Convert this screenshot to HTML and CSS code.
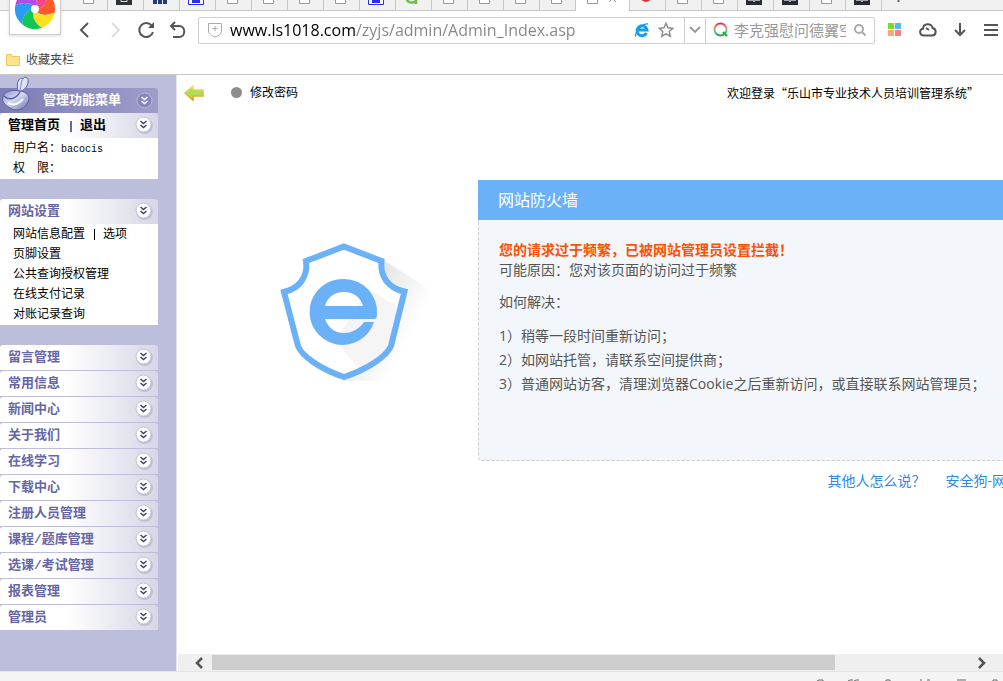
FILE: index.html
```html
<!DOCTYPE html>
<html lang="zh-CN">
<head>
<meta charset="utf-8">
<title>乐山市专业技术人员培训管理系统</title>
<link rel="stylesheet" href="styles.css">
</head>
<body>
<svg class="defs" aria-hidden="true">
  <defs>
    <linearGradient id="gold" x1="0" y1="0" x2="0" y2="1"><stop offset="0" stop-color="#f6e36a"/><stop offset="1" stop-color="#d99a1c"/></linearGradient>
    <linearGradient id="long" x1="0" y1="0" x2="1" y2="0.6"><stop offset="0.3" stop-color="#dcdcdc"/><stop offset="0.75" stop-color="#fff"/></linearGradient>
    <linearGradient id="pot" x1="0" y1="0" x2="1" y2="1"><stop offset="0" stop-color="#8d90cc"/><stop offset="0.45" stop-color="#d5d9f2"/><stop offset="1" stop-color="#686fb0"/></linearGradient>
    <linearGradient id="ring" x1="0" y1="0" x2="0" y2="1"><stop offset="0" stop-color="#e2228d"/><stop offset="0.35" stop-color="#f5a31c"/><stop offset="0.65" stop-color="#2fb7e8"/><stop offset="1" stop-color="#35a935"/></linearGradient>
    <symbol id="page" viewBox="0 0 16 5"><path d="M3.5-2V3.5h10V-2" fill="#fff" stroke="#999"/></symbol>
    <symbol id="dark" viewBox="0 0 16 5"><path d="M0 0h16v5H0z" fill="#262b35"/><path d="M2 0h12v1H2zM7 1h2v1H7z" fill="#a5a8ae"/></symbol>
    <symbol id="frame" viewBox="0 0 16 5"><path d="M0 0h16v5H0z" fill="#2e3338"/><path d="M5 0v1.5h6V0" fill="none" stroke="#ddd"/></symbol>
    <symbol id="bars" viewBox="0 0 16 5"><path d="M1 0h4v4H1zM6 0h4v4H6zM11 0h4v4h-4z" fill="#253c7c"/></symbol>
    <symbol id="paw" viewBox="0 0 16 5"><path d="M.5 0v4.5h15V0" fill="#fff" stroke="#2932e1"/><path d="M4 0h8v3H4z" fill="#2932e1"/></symbol>
    <symbol id="green" viewBox="0 0 16 5"><path d="M3-1c0 4 8 5 9 1M12-1v5" fill="none" stroke="#6cc04a" stroke-width="2.5"/></symbol>
    <symbol id="red" viewBox="0 0 16 5"><path d="M3-1c3 3 7 3 10 0z" fill="#e12a24" stroke="#e12a24"/></symbol>
    <path id="blade" d="M4 0Q12-4 12.900-15.300A20 20 0 0 1 19.700 3.500Q9.500 8.400 2 3.500z"/>
    <symbol id="toggle" viewBox="0 0 20 20">
      <circle cx="10.500" cy="10.800" r="8.300" fill="#a9a9cc" opacity=".55"/>
      <circle cx="9.500" cy="9.500" r="7.500" fill="#fff" stroke="#c2c2dc"/>
      <path d="M6.500 6l3 2.500 3-2.500M6.500 10l3 2.500 3-2.500" fill="none" stroke="#3f3f80" stroke-width="1.500"/>
    </symbol>
  </defs>
</svg>

<header class="browser">
  <a class="logo" href="#" aria-label="主页">
    <svg width="42" height="31" viewBox="0 0 42 31">
      <g transform="translate(20 9)">
        <use href="#blade" fill="#ff5a2c"/>
        <use href="#blade" fill="#ffdf22" transform="rotate(60)"/>
        <use href="#blade" fill="#0fc754" transform="rotate(120)"/>
        <use href="#blade" fill="#2a9bf7" transform="rotate(180)"/>
        <use href="#blade" fill="#b44be8" transform="rotate(240)"/>
        <use href="#blade" fill="#f5468c" transform="rotate(300)"/>
        <circle r="4" fill="#fff"/>
      </g>
    </svg>
  </a>
  <nav class="tabs" aria-label="标签页">
    <button class="tab" aria-label="标签 1"><svg><use href="#page"/></svg></button>
    <button class="tab" aria-label="标签 2"><svg><use href="#frame"/></svg></button>
    <button class="tab" aria-label="标签 3"><svg><use href="#bars"/></svg></button>
    <button class="tab" aria-label="标签 4"><svg><use href="#paw"/></svg></button>
    <button class="tab" aria-label="标签 5"><svg><use href="#page"/></svg></button>
    <button class="tab" aria-label="标签 6"><svg><use href="#page"/></svg></button>
    <button class="tab" aria-label="标签 7"><svg><use href="#page"/></svg></button>
    <button class="tab" aria-label="标签 8"><svg><use href="#page"/></svg></button>
    <button class="tab" aria-label="标签 9"><svg><use href="#paw"/></svg></button>
    <button class="tab" aria-label="标签 10"><svg><use href="#green"/></svg></button>
    <button class="tab" aria-label="标签 11"><svg><use href="#page"/></svg></button>
    <button class="tab" aria-label="标签 12"><svg><use href="#page"/></svg></button>
    <button class="tab" aria-label="标签 13"><svg><use href="#page"/></svg></button>
    <button class="tab" aria-label="标签 14"><svg><use href="#page"/></svg></button>
    <button class="tab active" aria-label="当前标签"><svg><use href="#page"/></svg><svg viewBox="0 0 16 5"><path d="M3-5l7 7M10-5L3 2" stroke="#999" fill="none"/></svg></button>
    <button class="tab" aria-label="标签 16"><svg><use href="#red"/></svg></button>
    <button class="tab" aria-label="标签 17"><svg><use href="#page"/></svg></button>
    <button class="tab" aria-label="标签 18"><svg><use href="#page"/></svg></button>
    <button class="tab" aria-label="标签 19"><svg><use href="#dark"/></svg></button>
    <button class="tab" aria-label="标签 20"><svg><use href="#dark"/></svg></button>
    <button class="tab" aria-label="标签 21"><svg><use href="#page"/></svg></button>
    <button class="tab" aria-label="标签 22"><svg><use href="#dark"/></svg></button>
    <button class="tab add" aria-label="新建标签"><svg viewBox="0 0 16 5"><path d="M8.500 0v2" stroke="#666" stroke-width="2"/></svg></button>
  </nav>
  <div class="toolbar">
    <div class="nav">
      <button aria-label="后退"><svg width="18" height="20" viewBox="0 0 18 20"><path d="M13 3L6 10l7 7" class="line"/></svg></button>
      <button aria-label="前进"><svg width="18" height="20" viewBox="0 0 18 20"><path d="M6 3l7 7-7 7" class="line faint"/></svg></button>
      <button aria-label="刷新"><svg width="18" height="20" viewBox="0 0 18 20"><path d="M15 6A7 7 0 1 0 16 12" class="line"/><path d="M17 2v6h-6z" fill="#555"/></svg></button>
      <button aria-label="恢复"><svg width="18" height="20" viewBox="0 0 18 20"><path d="M7 2L3 6l4 4M3 6h8c7 0 7 11 0 11H5" class="line"/></svg></button>
    </div>
    <form class="bar">
      <svg class="shield-mini" width="14" height="16" viewBox="0 0 14 16"><path d="M.5 1.500h13V9c0 3-3 5-6.500 6C3.500 14 .5 12 .5 9z" fill="none" stroke="#aaa"/><path d="M7 4v5M4.500 6.500h5" stroke="#aaa"/></svg>
      <input class="url" type="text" aria-label="地址" value="www.ls1018.com/zyjs/admin/Admin_Index.asp">
      <button type="button" aria-label="兼容模式"><svg width="16" height="16" viewBox="0 0 16 16"><path d="M12.500 11A5 5 0 1 1 13 8H4" fill="none" stroke="#12a0ec" stroke-width="3"/><path d="M2 14.500C0 12 8 1 14 2" fill="none" stroke="#12a0ec" stroke-width="1.300"/></svg></button>
      <button type="button" aria-label="收藏"><svg width="16" height="16" viewBox="0 0 16 16"><path d="M8 1.300l2 4.500 4.900.5-3.700 3.200 1.100 4.800L8 11.800l-4.300 2.500 1.100-4.800L1.100 6.300 6 5.800z" fill="none" stroke="#888" stroke-width="1.400"/></svg></button>
      <button type="button" class="drop" aria-label="展开"><svg width="14" height="10" viewBox="0 0 14 10"><path d="M2 2l5 5 5-5" fill="none" stroke="#999" stroke-width="1.800"/></svg></button>
      <svg class="engine" width="16" height="16" viewBox="0 0 16 16"><circle cx="7.500" cy="7.500" r="6" fill="none" stroke="url(#ring)" stroke-width="1.800"/><path d="M10 10l4 4" stroke="#35a935" stroke-width="2.400"/></svg>
      <input class="search" type="text" aria-label="搜索" placeholder="李克强慰问德翼空">
      <button type="button" class="find" aria-label="搜索"><svg width="14" height="14" viewBox="0 0 14 14"><circle cx="6" cy="6" r="4" fill="none" stroke="#aaa" stroke-width="2"/><path d="M9 9l3.500 3.500" stroke="#aaa" stroke-width="2"/></svg></button>
    </form>
    <div class="tools">
      <button aria-label="应用"><svg width="14" height="14" viewBox="0 0 14 14"><path fill="#7cdb22" d="M0 0h6v6H0z"/><path fill="#5ab4fb" d="M7 0h6v6H7z"/><path fill="#fda67c" d="M0 7h6v6H0z"/><path fill="#f57f88" d="M7 7h6v6H7z"/></svg></button>
      <button aria-label="云"><svg width="18" height="14" viewBox="0 0 18 14"><path d="M5 12.500C0 12.500 0 6 4 5.800 4 0 13 0 13.500 5 18 6 17.500 12.500 13 12.500zM7 5l3 2" class="line"/></svg></button>
      <button aria-label="下载"><svg width="14" height="14" viewBox="0 0 14 14"><path d="M7 0v12M2 7l5 5 5-5" class="line"/></svg></button>
      <button aria-label="菜单"><svg width="14" height="14" viewBox="0 0 14 14"><path d="M0 2h14M0 7h14M0 12h14" class="line"/></svg></button>
    </div>
  </div>
  <div class="bookmarks">
    <svg width="14" height="12" viewBox="0 0 14 12"><path d="M.5.5h5l1 2h7v9H.5z" fill="#fde58b" stroke="#efc45c"/></svg>
    <a href="#">收藏夹栏</a>
  </div>
</header>

<div class="frames">
  <aside class="side">
    <div class="side-title">
      <svg class="pot" width="32" height="36" viewBox="0 0 32 36"><path d="M18 15C16 6 19 1 23 3c1-3 6-2 5 3 0 4-3 7-6 9z" fill="#dfe3f7" stroke="#5b60a5"/><path d="M22 4c-1 4-1 7-2 10" stroke="#7a80be" fill="none"/><path d="M3 21c0-5 9-8 16-6 8 0 12 6 9 11-2 6-10 10-16 7S1 26 3 21z" fill="url(#pot)" stroke="#585da3"/><path d="M4 20c5 5 12 3 16-4" fill="none" stroke="#5a60a6" stroke-width="1.500"/><path d="M8 27c5 3 11 1 15-4" fill="none" stroke="#fff" stroke-width="2"/></svg>
      <h1>管理功能菜单</h1>
      <button aria-label="展开菜单"><svg width="20" height="20" viewBox="0 0 20 20"><circle cx="9.500" cy="9.500" r="7.500" fill="#8686bb" stroke="#b9b9dc"/><path d="M6.500 6l3 2.500 3-2.500M6.500 10l3 2.500 3-2.500" fill="none" stroke="#fff" stroke-width="1.500"/></svg></button>
    </div>
    <section class="group open">
      <h2 class="top"><a href="#">管理首页</a><span class="bar-sep"></span><a href="#">退出</a><button aria-label="展开"><svg><use href="#toggle"/></svg></button></h2>
      <ul><li>用户名：<span class="user">bacocis</span></li><li>权&#12288;限：</li></ul>
    </section>
    <section class="group open">
      <h2>网站设置<button aria-label="展开"><svg><use href="#toggle"/></svg></button></h2>
      <ul>
        <li class="pair"><a href="#">网站信息配置</a><span class="thin-sep"></span><a href="#">选项</a></li>
        <li><a href="#">页脚设置</a></li>
        <li><a href="#">公共查询授权管理</a></li>
        <li><a href="#">在线支付记录</a></li>
        <li><a href="#">对账记录查询</a></li>
      </ul>
    </section>
    <section class="closed">
      <h2>留言管理<button aria-label="展开"><svg><use href="#toggle"/></svg></button></h2>
      <h2>常用信息<button aria-label="展开"><svg><use href="#toggle"/></svg></button></h2>
      <h2>新闻中心<button aria-label="展开"><svg><use href="#toggle"/></svg></button></h2>
      <h2>关于我们<button aria-label="展开"><svg><use href="#toggle"/></svg></button></h2>
      <h2>在线学习<button aria-label="展开"><svg><use href="#toggle"/></svg></button></h2>
      <h2>下载中心<button aria-label="展开"><svg><use href="#toggle"/></svg></button></h2>
      <h2>注册人员管理<button aria-label="展开"><svg><use href="#toggle"/></svg></button></h2>
      <h2>课程/题库管理<button aria-label="展开"><svg><use href="#toggle"/></svg></button></h2>
      <h2>选课/考试管理<button aria-label="展开"><svg><use href="#toggle"/></svg></button></h2>
      <h2>报表管理<button aria-label="展开"><svg><use href="#toggle"/></svg></button></h2>
      <h2>管理员<button aria-label="展开"><svg><use href="#toggle"/></svg></button></h2>
    </section>
  </aside>

  <div class="right">
    <div class="crumbs">
      <button aria-label="收起侧栏"><svg width="20" height="16" viewBox="0 0 20 16"><path d="M1 8l8-7v4h10v6H9v4z" fill="#a8e05a" stroke="url(#gold)" stroke-width="1.600"/></svg></button>
      <span class="dot"></span>
      <a href="#">修改密码</a>
      <p>欢迎登录“乐山市专业技术人员培训管理系统”</p>
    </div>
    <main class="content">
      <svg class="shield" width="170" height="138" viewBox="0 0 170 138">
        <path d="M103 17L168 58l-20 80H63z" fill="url(#long)" opacity=".75"/>
        <path d="M64 3.500L101.500 18C100 32 107 45 124.500 48.500L111 103C107 113 88 126 64 134 40 126 22 113 18 103L4 49C21 45 28 32 26 18z" fill="#fff"/>
        <path d="M89 46l32 20-12 40-30 20L55 98z" fill="#f1f1f1" opacity=".75"/>
        <path d="M64 3.500L101.500 18C100 32 107 45 124.500 48.500L111 103C107 113 88 126 64 134 40 126 22 113 18 103L4 49C21 45 28 32 26 18z" fill="none" stroke="#6bb1f8" stroke-width="6"/>
        <path fill-rule="evenodd" fill="#6bb1f8" d="M64 36a33 33 0 0 1 33 36q0 4-3 4H45c3 8 9 14 19 14 9 0 16-5 20-11h10A33 33 0 1 1 64 36zM45 63h38c-2-8-9-14-19-14s-17 6-19 14z"/>
      </svg>
      <div class="panel">
        <article class="card">
          <h3>网站防火墙</h3>
          <div class="card-body">
            <strong>您的请求过于频繁，已被网站管理员设置拦截！</strong>
            <p>可能原因：您对该页面的访问过于频繁</p>
            <p class="how">如何解决：</p>
            <ul>
              <li>1）稍等一段时间重新访问；</li>
              <li>2）如网站托管，请联系空间提供商；</li>
              <li>3）普通网站访客，清理浏览器Cookie之后重新访问，或直接联系网站管理员；</li>
            </ul>
          </div>
        </article>
        <div class="links"><a href="#">其他人怎么说？</a><a href="#">安全狗-网站</a></div>
      </div>
    </main>
    <div class="scroll">
      <button aria-label="向左滚动"><svg width="10" height="12" viewBox="0 0 10 12"><path d="M8 1L3 6l5 5" fill="none" stroke="#555" stroke-width="2.500"/></svg></button>
      <div class="track"><div class="thumb"></div></div>
      <button aria-label="向右滚动"><svg width="10" height="12" viewBox="0 0 10 12"><path d="M2 1l5 5-5 5" fill="none" stroke="#555" stroke-width="2.500"/></svg></button>
    </div>
  </div>
</div>
<footer class="status"><svg width="190" height="2" viewBox="0 0 190 2"><path d="M4 2l2-1h4v1M35 2l2-1h3M41 2l2-1h3M73 2V1h4v1M107 1h2M114 1h3M144 1h9M180 2V1h4v1" fill="none" stroke="#666"/></svg></footer>
</body>
</html>
```
FILE: styles.css
```css
* { box-sizing: border-box; margin: 0; padding: 0; }
body {
  display: flex; flex-direction: column; height: 100vh; overflow: hidden;
  background: #fff; color: #000;
  font: 12px/20px "Liberation Sans", "Noto Sans CJK SC", sans-serif;
}
button { display: flex; align-items: center; justify-content: center; border: 0; background: none; }
a { color: inherit; text-decoration: none; }
ul { list-style: none; }
svg { display: block; flex: none; }
.defs { position: absolute; width: 0; height: 0; }
.line { fill: none; stroke: #555; stroke-width: 2; }
.line.faint { stroke: #ddd; }

.browser { position: relative; flex: none; border-bottom: 1px solid #c6c6c6; }
.logo {
  position: absolute; left: 9px; top: 0; width: 52px; height: 35px; padding-left: 5px;
  background: #fff; border: 1px solid #ccc; border-top: 0; box-shadow: 0 1px 3px #ddd;
}
.tabs { display: flex; height: 11px; padding-left: 72px; background: #f1f1f1; border-bottom: 1px solid #c9c9c9; }
.tab { flex: none; width: 36px; height: 11px; padding-left: 8px; border-right: 1px solid #c9c9c9; align-items: flex-start; justify-content: flex-start; }
.tab svg { width: 16px; height: 5px; }
.tab.active { width: 54px; background: #fff; gap: 6px; }
.tab.add { border: 0; }
.toolbar { display: flex; align-items: center; height: 38px; padding: 0 5px 0 75px; }
.nav { display: flex; gap: 13px; width: 123px; flex: none; }
.bar { display: flex; align-items: center; flex: 1; height: 27px; border: 1px solid #d0d0d0; border-radius: 2px; padding-left: 9px; }
.bar input { border: 0; outline: 0; min-width: 0; background: none; }
.bar button { flex: none; width: 24px; height: 25px; }
.bar .url {
  flex: 1; margin-left: 8px; height: 25px;
  font: 16px "Open Sans", "Noto Sans", sans-serif;
  color: transparent; background: linear-gradient(90deg, #000 125px, #858585 125px); background-clip: text;
}
.bar .drop { width: 22px; margin-left: 6px; border-left: 1px solid #d0d0d0; border-right: 1px solid #d0d0d0; }
.engine { margin-left: 7px; }
.bar .search { flex: none; width: 112px; margin-left: 5px; font: 15px "Liberation Sans", "Noto Sans CJK SC", sans-serif; }
.search::placeholder { color: #999; opacity: 1; }
.bar .find { width: 28px; }
.tools { display: flex; align-items: center; justify-content: space-between; width: 123px; padding-left: 13px; flex: none; }
.bookmarks { display: flex; align-items: center; gap: 6px; height: 25px; padding: 0 6px 4px; color: #444; }

.frames { display: flex; flex: 1; min-height: 0; }
.side { flex: none; width: 177px; padding: 13px 18px 0 0; background: #bdbedb; border-right: 1px solid #e4e4ee; }
.side-title {
  position: relative; display: flex; align-items: center; height: 25px; padding-left: 43px;
  background: linear-gradient(90deg, #7d7db5, #9d9dca); color: #fff; border-radius: 0 3px 0 0;
}
.pot { position: absolute; left: 0; bottom: 1px; }
.side h1, .side h2 { font: bold 13px/24px "Liberation Mono", "Noto Sans CJK SC", monospace; }
.side button { width: 20px; height: 20px; margin-left: auto; margin-right: 3px; }
.side h2 svg { width: 20px; height: 20px; }
.side h2 {
  display: flex; align-items: center; height: 25px; padding: 1px 0 0 8px; color: #6666a6;
  background: linear-gradient(90deg, #fff 42%, #d6d6e6); border-radius: 3px 3px 0 0;
}
.side h2.top { color: #000; }
.side h2 button { margin-bottom: 3px; margin-right: 4px; }
.bar-sep { width: 2px; height: 11px; margin: 0 8px 0 10px; background: #6666a6; }
.thin-sep { width: 1px; height: 11px; margin: 0 8px 0 9px; background: #000; }
.group { margin-bottom: 20px; }
.group ul { padding: 0 0 1px 13px; background: #fff; }
.group li { height: 20px; line-height: 20px; }
.pair { display: flex; align-items: center; }
.user { font: 10px "Liberation Mono", monospace; }
.closed { display: grid; gap: 1px; }

.right { display: flex; flex-direction: column; flex: 1; min-width: 0; }
.crumbs { display: flex; align-items: center; height: 35px; padding: 0 24px 0 7px; }
.crumbs p { margin-left: auto; font-family: "Noto Sans CJK SC", sans-serif; }
.dot { width: 11px; height: 11px; margin: 0 8px 0 27px; border-radius: 50%; background: #8d8d8d; }
.content {
  display: flex; flex: 1; gap: 28px; padding: 70px 0 0 103px; overflow: hidden;
  font-size: 14px; font-family: "Open Sans", "Noto Sans CJK SC", sans-serif;
}
.shield { margin-top: 63px; }
.panel { flex: 1 0 542px; }
.card h3 { padding-left: 20px; background: #6bb1f8; color: #fff; font-size: 16px; line-height: 40px; font-weight: normal; }
.card-body {
  height: 241px; padding: 20px 20px 0; color: #555; background: #f3f7fb;
  border: 1px dashed #ccc; border-top: 0; border-radius: 0 0 4px 4px;
}
.card-body strong { display: block; color: #ff5000; }
.card .how { padding: 12px 0; }
.card-body li { line-height: 24px; }
.links { display: flex; justify-content: flex-end; gap: 20px; padding-top: 10px; color: #2a8ae6; }
.scroll { display: flex; flex: none; height: 17px; padding: 0 11px; margin-left: 1px; background: #efefef; }
.scroll button { width: 20px; }
.track { flex: 1; padding: 1px 0; margin-left: 3px; }
.thumb { width: 82%; height: 15px; background: #cdcdcd; }
.status { display: flex; flex: none; align-items: flex-end; justify-content: flex-end; height: 10px; background: #f4f4f4; border-top: 1px solid #e4e4e4; }
```
